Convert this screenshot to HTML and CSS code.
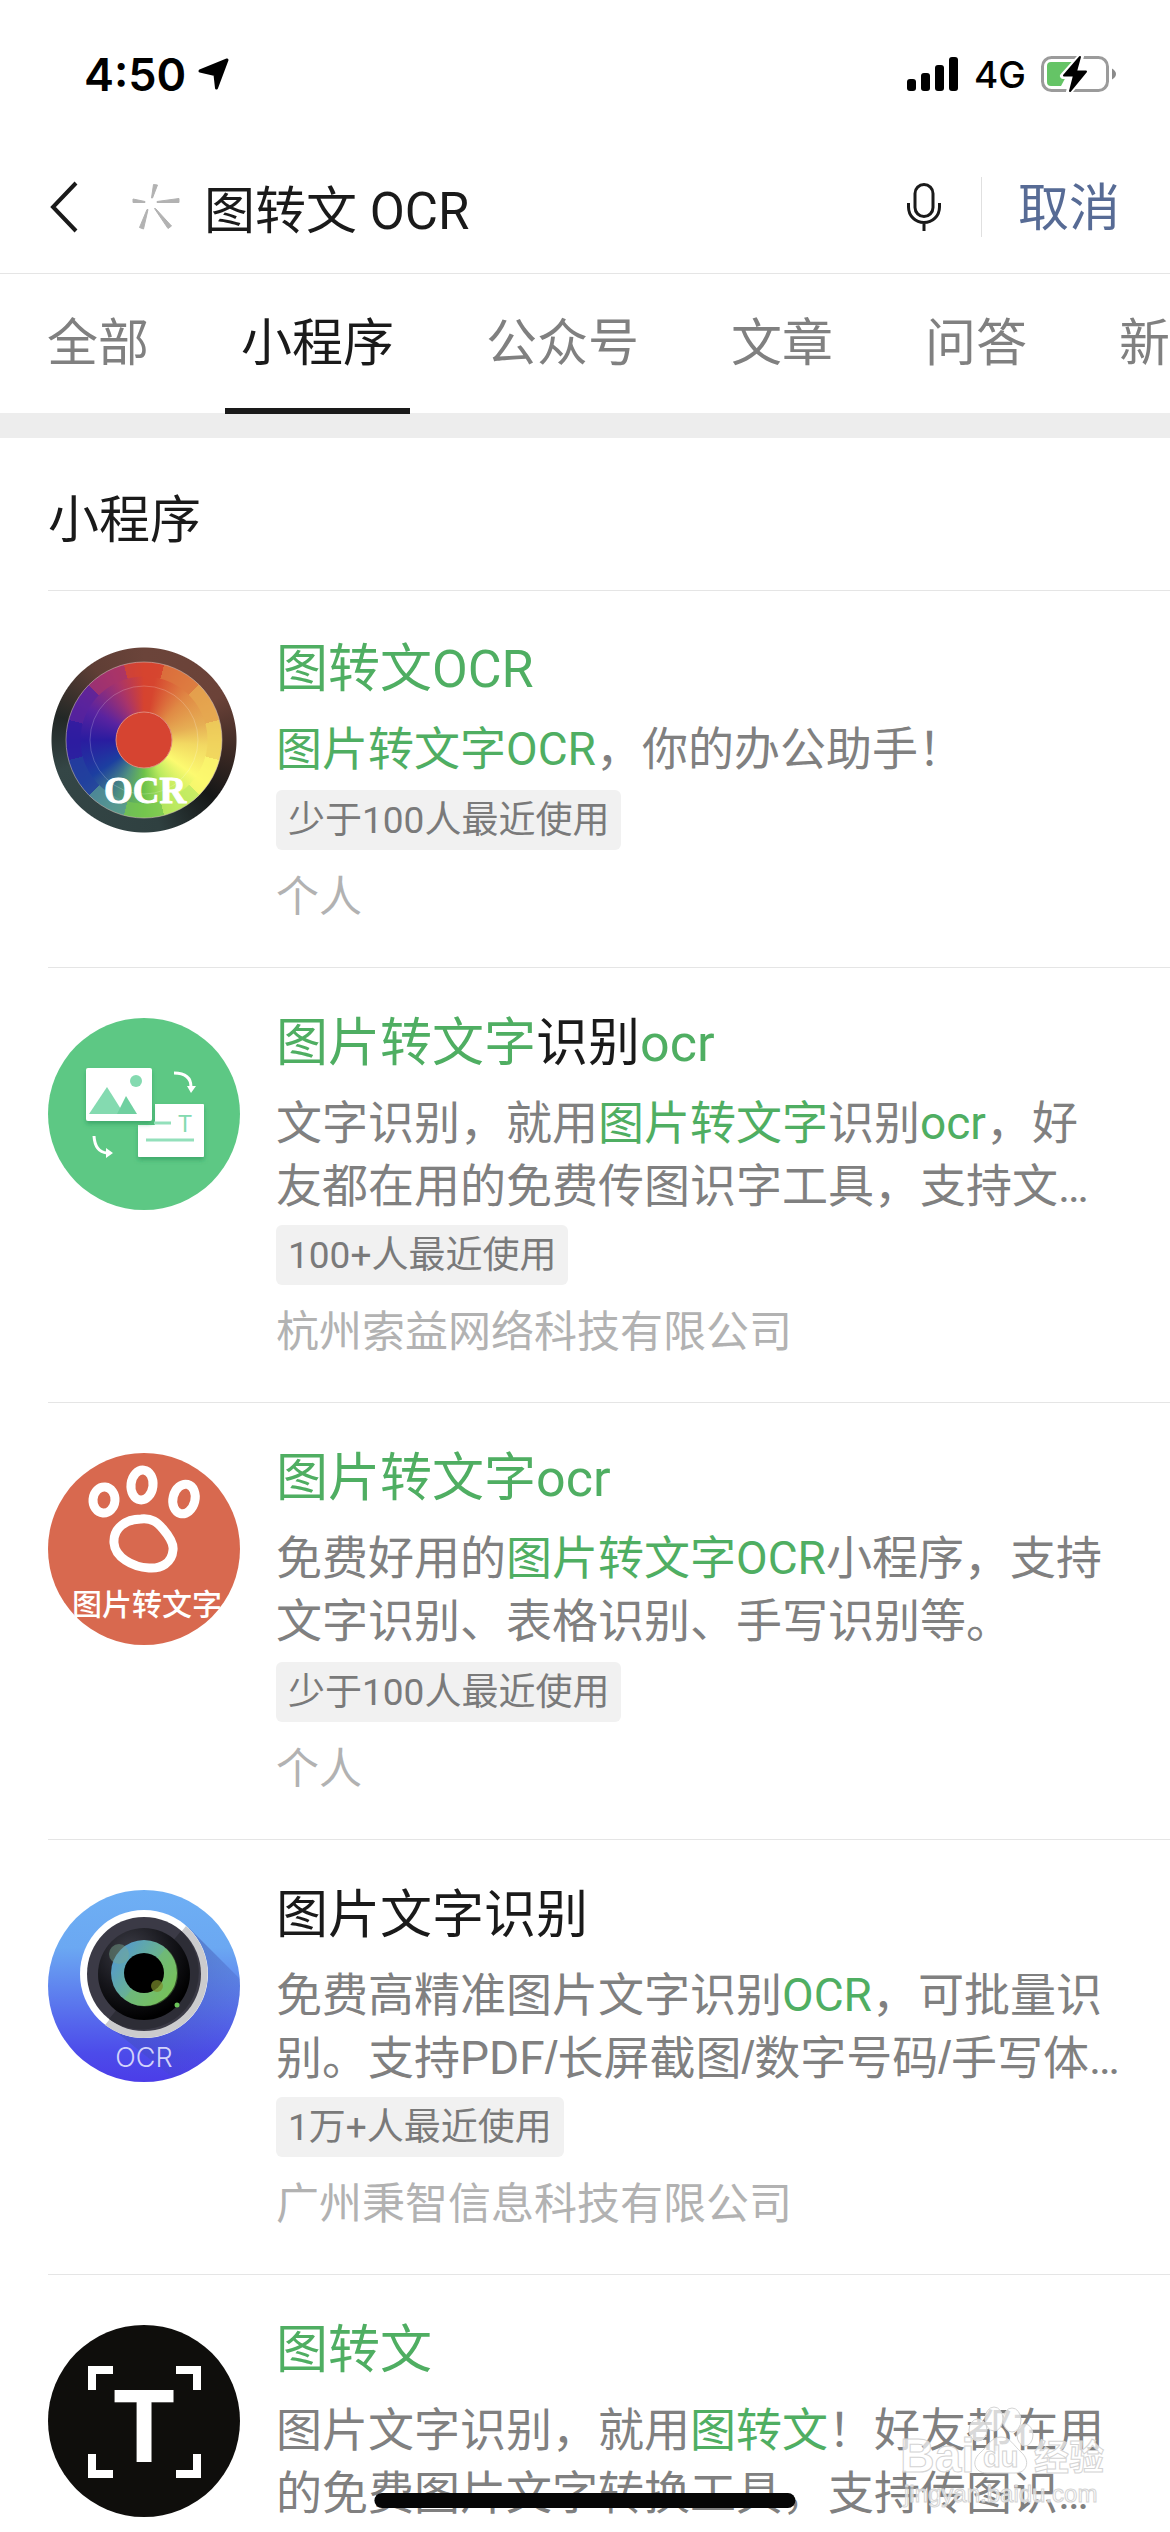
FILE: index.html
```html
<!DOCTYPE html>
<html lang="zh-CN">
<head>
  <meta charset="UTF-8" />
  <meta name="viewport" content="width=device-width, initial-scale=1.0"/>
  <title>图转文 OCR - 小程序</title>
  <link rel="stylesheet" href="styles.css">
</head>

<body>
  <div class="page">
    <!-- 状态栏 -->
    <div class="status-bar">
      <div class="status-left">
        <span class="clock">4:50</span>
        <svg width="32" height="32" viewBox="0 0 32 32" aria-hidden="true">
          <path d="M2 13 L29 2 L18.500 30 L17 16.500Z" stroke="#000" stroke-width="3" stroke-linejoin="round"/>
        </svg>
      </div>
      <div class="status-right">
        <svg width="52" height="34" viewBox="0 0 52 34" aria-hidden="true">
          <rect x="0" y="22" width="9" height="12" rx="3"/>
          <rect x="14" y="16" width="9" height="18" rx="3"/>
          <rect x="28" y="8" width="9" height="26" rx="3"/>
          <rect x="42" y="0" width="9" height="34" rx="3"/>
        </svg>
        <span class="network">4G</span>
        <svg width="76" height="38" viewBox="0 0 76 38" aria-hidden="true">
          <rect x="1.500" y="2.500" width="65" height="33" rx="9" fill="none" stroke="#9b9b9b" stroke-width="3"/>
          <path d="M71 13.500 Q75 16 75 19 T71 24.500Z" fill="#8a8a8a"/>
          <path d="M10 7 H33 L20 31 H10 Q6 31 6 27 V11 Q6 7 10 7Z" fill="#65c466"/>
          <path d="M40 1 L22 21 H32 L28 37 L46 16 H36Z" stroke="#fff" stroke-width="6" stroke-linejoin="round" fill="#fff"/>
          <path d="M39 2 L23 20.500 H33 L29 36 L45 16.500 H35Z" stroke="#000" stroke-width="2" stroke-linejoin="round"/>
        </svg>
      </div>
    </div>

    <!-- 搜索栏 -->
    <form class="search-bar">
      <button type="button" class="back" aria-label="返回">
        <svg width="28" height="52" viewBox="0 0 28 52" fill="none" stroke="#1a1a1a" stroke-width="4">
          <path d="M26 2 L3 26 L26 50"/>
        </svg>
      </button>
      <svg class="logo" width="48" height="48" viewBox="0 0 48 48" fill="#b2b2b2" stroke="#b2b2b2" stroke-linejoin="round" aria-hidden="true">
        <path d="M19.500 15 L21.500 1.500 L25.500 2 L20.500 15Z M25 18.500 L47 15.500 V19.500 L25 19.500Z M22.500 25.500 L36 45.500 L39.500 43 L23.500 25.500Z M15 26.500 L7.500 44.500 L11.500 46 L16 26.500Z M13 18.500 L1 16 V19.500 L13 19.500Z"/>
      </svg>
      <input type="text" class="search-input" aria-label="搜索" value="图转文 OCR" />
      <button type="button" class="mic" aria-label="语音输入">
        <svg width="34" height="48" viewBox="0 0 34 48" fill="none" stroke="#1a1a1a" stroke-width="3">
          <rect x="8" y="1.500" width="18" height="32" rx="9"/>
          <path d="M1.500 20 V24 C1.500 33 8.500 39.500 17 39.500 S32.500 33 32.500 24 V20 M17 39.500 V48"/>
        </svg>
      </button>
      <button type="button" class="cancel">取消</button>
    </form>

    <!-- 分类 -->
    <nav class="tabs">
      <a href="#" class="tab">全部</a>
      <a href="#" class="tab active">小程序</a>
      <a href="#" class="tab">公众号</a>
      <a href="#" class="tab">文章</a>
      <a href="#" class="tab">问答</a>
      <a href="#" class="tab">新闻</a>
    </nav>

    <main class="results">
      <h1 class="section-title">小程序</h1>

      <ul class="list">
        <li class="item">
          <div class="icon wheel">
            <div class="wheel-dial"></div>
            <div class="wheel-blocks"></div>
            <svg class="wheel-top" viewBox="0 0 192 192">
              <circle cx="96" cy="96" r="78" fill="none" stroke="#c9b7b0" stroke-opacity=".6"/>
              <circle cx="96" cy="96" r="54" fill="none" stroke="#fff" stroke-opacity=".2"/>
              <circle cx="96" cy="96" r="28" fill="#d64431" stroke="#e08a7c"/>
              <text x="97" y="159" class="wheel-text">OCR</text>
            </svg>
          </div>
          <div class="info">
            <h2 class="name"><em>图转文OCR</em></h2>
            <p class="desc"><em>图片转文字OCR</em>，你的办公助手！</p>
            <span class="tag">少于100人最近使用</span>
            <p class="source">个人</p>
          </div>
        </li>

        <li class="item">
          <svg class="icon" viewBox="0 0 192 192" aria-hidden="true">
            <defs>
              <filter id="cardShadow" x="-20%" y="-20%" width="140%" height="150%">
                <feDropShadow dx="0" dy="3" stdDeviation="2" flood-color="#1d8a52" flood-opacity=".5"/>
              </filter>
            </defs>
            <circle cx="96" cy="96" r="96" fill="#5dc884"/>
            <path d="M107 86 H155 Q156 86 156 87 V138 Q156 139 155 139 H91 Q90 139 90 138 V107 H107Z" fill="#fff" filter="url(#cardShadow)"/>
            <rect x="38" y="50" width="66" height="53" rx="2" fill="#fff" filter="url(#cardShadow)"/>
            <circle cx="88" cy="63" r="6" fill="#84dab0"/>
            <path d="M41 96 L59 69 L76 96Z" fill="#84dab0"/>
            <path d="M69 96 L78 78 L89 96Z" fill="#6fd0a0"/>
            <path d="M106 105 H123 M98 122 H146" stroke="#93e0bb" stroke-width="3"/>
            <text x="137" y="114" class="card-text">T</text>
            <path d="M126 55 Q143 55 143 69 M46 118 Q47 134 59 135" fill="none" stroke="#fff" stroke-width="3"/>
            <path d="M139 68 H148 L143 75Z M58 130 L65 135 L58 140Z" fill="#fff"/>
          </svg>
          <div class="info">
            <h2 class="name"><em>图片转文字</em>识别<em>ocr</em></h2>
            <p class="desc cut">文字识别，就用<em>图片转文字</em>识别<em>ocr</em>，好<br>友都在用的免费传图识字工具，支持文…</p>
            <span class="tag">100+人最近使用</span>
            <p class="source">杭州索益网络科技有限公司</p>
          </div>
        </li>

        <li class="item">
          <svg class="icon" viewBox="0 0 192 192" aria-hidden="true">
            <circle cx="96" cy="96" r="96" fill="#d8694f"/>
            <g fill="none" stroke="#fff" stroke-width="9">
              <ellipse cx="56" cy="47" rx="11" ry="13" transform="rotate(5 56 47)"/>
              <ellipse cx="94" cy="32" rx="11" ry="15" transform="rotate(7 94 32)"/>
              <ellipse cx="136" cy="46" rx="11" ry="15" transform="rotate(14 136 46)"/>
              <path d="M93 66 C104 65 109 69 115 76 C121 83 126 90 125 97 C124 110 113 116 101 115 C84 114 67 104 66 90 C65 75 78 66 93 66Z"/>
            </g>
            <text x="99" y="162" class="paw-text">图片转文字</text>
          </svg>
          <div class="info">
            <h2 class="name"><em>图片转文字ocr</em></h2>
            <p class="desc">免费好用的<em>图片转文字OCR</em>小程序，支持<br>文字识别、表格识别、手写识别等。</p>
            <span class="tag">少于100人最近使用</span>
            <p class="source">个人</p>
          </div>
        </li>

        <li class="item">
          <svg class="icon" viewBox="0 0 192 192" aria-hidden="true">
            <defs>
              <linearGradient id="sky" x1="0" y1="0" x2="0" y2="1">
                <stop offset="0" stop-color="#6eaff4"/>
                <stop offset=".3" stop-color="#6ba8f2"/>
                <stop offset=".85" stop-color="#4c4bea"/>
                <stop offset="1" stop-color="#4b3de8"/>
              </linearGradient>
              <linearGradient id="shade" x1="0.300" y1="0.300" x2="0.800" y2="0.800">
                <stop offset="0" stop-color="#3c4ba8" stop-opacity=".5"/>
                <stop offset="1" stop-color="#3c4ba8" stop-opacity="0"/>
              </linearGradient>
              <radialGradient id="glass" cx=".35" cy=".25" r=".75">
                <stop offset="0" stop-color="#3c3c46"/>
                <stop offset=".6" stop-color="#15151a"/>
                <stop offset="1" stop-color="#000"/>
              </radialGradient>
              <linearGradient id="iris" x1="0" y1=".1" x2="1" y2=".8">
                <stop offset="0" stop-color="#4f94dc"/>
                <stop offset=".5" stop-color="#68b194"/>
                <stop offset="1" stop-color="#78c355"/>
              </linearGradient>
              <clipPath id="round"><circle cx="96" cy="96" r="96"/></clipPath>
            </defs>
            <circle cx="96" cy="96" r="96" fill="url(#sky)"/>
            <path d="M141 38 L210 107 L140 200 L51 128Z" fill="url(#shade)" clip-path="url(#round)"/>
            <circle cx="96" cy="84" r="64" fill="#fff"/>
            <path d="M138 36 A64 64 0 0 1 57 135Z" fill="#cbcbcd"/>
            <circle cx="96" cy="84" r="57" fill="#3b3a46"/>
            <path d="M133 41 A57 57 0 0 1 61 129Z" fill="#2d2d36"/>
            <circle cx="96" cy="84" r="46" fill="url(#glass)"/>
            <circle cx="96" cy="83" r="33" fill="url(#iris)"/>
            <path d="M118 58 A33 33 0 0 1 76 109Z" fill="#78c355" opacity=".35"/>
            <circle cx="96" cy="83" r="20"/>
            <circle cx="71" cy="64" r="10" fill="#7aa890" opacity=".45"/>
            <circle cx="109" cy="96" r="6" fill="#7d8f2c" opacity=".7"/>
            <circle cx="129" cy="115" r="2.500" fill="#6cc45a"/>
            <text x="96" y="177" class="lens-text">OCR</text>
          </svg>
          <div class="info">
            <h2 class="name">图片文字识别</h2>
            <p class="desc cut">免费高精准图片文字识别<em>OCR</em>，可批量识<br>别。支持PDF<span class="slash">/</span>长屏截图<span class="slash">/</span>数字号码<span class="slash">/</span>手写体…</p>
            <span class="tag">1万+人最近使用</span>
            <p class="source">广州秉智信息科技有限公司</p>
          </div>
        </li>

        <li class="item">
          <svg class="icon" viewBox="0 0 192 192" aria-hidden="true">
            <circle cx="96" cy="96" r="96" fill="#0f0e0c"/>
            <path d="M44 65 V45 H65 M128 45 H149 V65 M149 129 V149 H128 M65 149 H44 V129" fill="none" stroke="#fff" stroke-width="8"/>
            <text x="96" y="137" class="scan-text">T</text>
          </svg>
          <div class="info">
            <h2 class="name"><em>图转文</em></h2>
            <p class="desc cut">图片文字识别，就用<em>图转文</em>！好友都在用<br>的免费图片文字转换工具，支持传图识…</p>
          </div>
        </li>
      </ul>
    </main>

    <!-- 水印 -->
    <div class="watermark">
      <svg viewBox="0 0 206 106" aria-hidden="true">
        <g class="mark">
          <ellipse cx="78" cy="24" rx="9" ry="11"/>
          <ellipse cx="94" cy="13" rx="9" ry="12"/>
          <ellipse cx="112" cy="14" rx="9" ry="12"/>
          <ellipse cx="125" cy="29" rx="8" ry="11"/>
          <path d="M101 31 C110 31 114 40 121 46 C131 55 127 67 115 67 H87 C74 67 71 55 80 47 C88 40 91 31 101 31Z"/>
        </g>
        <g class="mark">
          <text x="0" y="66" class="mark-big">Bai</text>
          <text x="83" y="61" class="mark-du">du</text>
          <text x="134" y="64" class="mark-cn">经验</text>
          <text x="4" y="96" class="mark-url">jingyan.baidu.com</text>
        </g>
      </svg>
    </div>

    <div class="home-indicator"></div>
  </div>
</body>
</html>
```
FILE: styles.css
```css
/*
  主要颜色:
  - 关键词高亮: #4fae62
  - 正文: #1a1a1a / 描述: #808080 / 来源: #b2b2b2
  - 分割线: #e5e5e5
*/
* {
  box-sizing: border-box;
}

body {
  margin: 0;
  font-family: Roboto, "Noto Sans CJK SC", sans-serif;
  color: #1a1a1a;
  background: #fff;
}

.page {
  position: relative;
  height: 100vh;
  overflow: hidden;
}

h1, h2, p, ul {
  margin: 0;
  padding: 0;
  font-weight: 400;
}

button {
  padding: 0;
  border: none;
  background: transparent;
  font-family: inherit;
  cursor: pointer;
}

svg {
  display: block;
  flex: none;
}

/* 状态栏 */
.status-bar {
  display: flex;
  justify-content: space-between;
  align-items: center;
  height: 148px;
  padding: 0 53px 0 84px;
  color: #000;
}

.status-left {
  display: flex;
  align-items: center;
  gap: 12px;
}

.status-right {
  display: flex;
  align-items: center;
  gap: 15px;
}

.clock {
  font-family: Inter, sans-serif;
  font-size: 45px;
  font-weight: 600;
}

.network {
  font-family: Inter, sans-serif;
  font-size: 37px;
  font-weight: 500;
}

/* 搜索栏 */
.search-bar {
  display: flex;
  align-items: center;
  height: 126px;
  padding: 0 50px 8px 50px;
  border-bottom: 1px solid #e5e5e5;
}

.logo {
  margin: 0 24px 0 54px;
}

.search-input {
  flex: 1;
  min-width: 0;
  height: 80px;
  padding: 0;
  border: none;
  outline: none;
  background: transparent;
  font-family: inherit;
  font-size: 51px;
  color: #1a1a1a;
}

.mic {
  margin-right: 40px;
}

.cancel {
  padding: 4px 0 0 36px;
  border-left: 1px solid #e0e0e0;
  font-size: 51px;
  line-height: 56px;
  color: #576b95;
}

/* 分类 */
.tabs {
  position: relative;
  z-index: 1;
  display: flex;
  gap: 60px;
  height: 139px;
  padding-left: 31px;
  white-space: nowrap;
}

.tab {
  flex: none;
  height: 140px;
  padding: 0 16px;
  font-size: 51px;
  line-height: 140px;
  color: #808080;
  text-decoration: none;
}

.tab.active {
  color: #1a1a1a;
  border-bottom: 6px solid #1a1a1a;
}

/* 结果列表 */
.results {
  border-top: 25px solid #ededed;
}

.section-title {
  margin-left: 48px;
  height: 153px;
  border-bottom: 1px solid #e5e5e5;
  font-size: 51px;
  line-height: 166px;
}

.list {
  padding-top: 3px;
  margin-left: 48px;
  list-style: none;
}

.item {
  display: flex;
  gap: 36px;
  padding: 42px 0 40px;
  border-bottom: 1px solid #e5e5e5;
}

.item:last-child {
  padding-bottom: 0;
  border-bottom: none;
}

.icon {
  flex: none;
  width: 192px;
  height: 192px;
  margin-top: 8px;
}

.info {
  flex: 1;
  min-width: 0;
}

.name {
  font-size: 52px;
  line-height: 68px;
}

.desc {
  margin: 14px 0 9px;
  font-size: 46px;
  line-height: 63px;
  color: #808080;
  white-space: nowrap;
}

.desc.cut {
  height: 124px;
}

.slash {
  font-family: "Liberation Sans", sans-serif;
}

em {
  font-style: normal;
  color: #4fae62;
}

.tag {
  display: block;
  width: fit-content;
  padding: 2px 12px 0;
  border-radius: 6px;
  background: #f1f1f1;
  font-size: 37px;
  line-height: 58px;
  color: #7a7a7a;
}

.source {
  margin-top: 17px;
  font-size: 43px;
  line-height: 60px;
  color: #b2b2b2;
}

/* 色轮图标 */
.wheel {
  display: grid;
  place-items: center;
  background: radial-gradient(circle, transparent 92px, #fff 93px),
    conic-gradient(#6b443a, #6b4238 60deg, #3a2823 100deg, #151717 130deg, #2f4040 170deg, #344646 250deg, #222826 285deg, #5f3e35 325deg, #6b443a);
}

.wheel > * {
  grid-area: 1 / 1;
}

.wheel-dial,
.wheel-blocks {
  width: 156px;
  height: 156px;
  border-radius: 50%;
}

.wheel-dial {
  background: conic-gradient(#d6432f, #d6452f 10deg, #e08a45 45deg, #e6ae54 75deg, #f2d862 95deg, #fcfa70 125deg, #b9ea5e 155deg, #6dc24a 180deg, #4f9080 205deg, #1c3fa0 235deg, #2a1ca0 270deg, #5a23a0 300deg, #a8346a 335deg, #d6432f);
}

.wheel-blocks {
  background: conic-gradient(from -15deg, #d6452f 30deg, #dd7a40 30deg 60deg, #e6a850 60deg 90deg, #f0d35c 90deg 120deg, #fcf96e 120deg 150deg, #bdea62 150deg 180deg, #78c850 180deg 210deg, #5a9a98 210deg 240deg, #24429e 240deg 270deg, #2f1ca0 270deg 300deg, #5a239c 300deg 330deg, #a8346a 330deg);
  mask: radial-gradient(circle, transparent 63px, #000 64px);
  opacity: 0.7;
}

/* 圆环和文字盖在色块上面 */
.wheel-top {
  position: relative;
  width: 192px;
  height: 192px;
}

.wheel-text {
  fill: #fff;
  stroke: #fff;
  font-family: "Liberation Serif", serif;
  font-size: 37px;
  font-weight: 700;
  text-anchor: middle;
}

.card-text {
  fill: #84dab0;
  font-family: "Liberation Sans", sans-serif;
  font-size: 23px;
  text-anchor: middle;
}

.paw-text {
  fill: #fff;
  font-family: "Noto Sans CJK SC", sans-serif;
  font-size: 30px;
  font-weight: 500;
  text-anchor: middle;
}

.lens-text {
  fill: #d3d3fa;
  font-family: Inter, sans-serif;
  font-size: 27px;
  font-weight: 300;
  text-anchor: middle;
}

.scan-text {
  fill: #fff;
  font-family: Inter, sans-serif;
  font-size: 99px;
  font-weight: 700;
  text-anchor: middle;
}

/* 水印 */
.watermark {
  position: absolute;
  right: 64px;
  bottom: 20px;
  width: 206px;
}

.mark {
  fill: rgba(255, 255, 255, 0.7);
  stroke: #d4d4d4;
  stroke-width: 1;
  font-family: "Liberation Sans", "Noto Sans CJK SC", sans-serif;
  font-weight: 700;
}

.mark-big { font-size: 48px; }
.mark-du { font-size: 29px; }
.mark-cn { font-size: 35px; }
.mark-url {
  font-size: 24px;
  font-weight: 400;
}

.home-indicator {
  position: absolute;
  left: 50%;
  bottom: 24px;
  width: 36%;
  height: 15px;
  border-radius: 8px;
  background: #060606;
  transform: translateX(-50%);
}
```
